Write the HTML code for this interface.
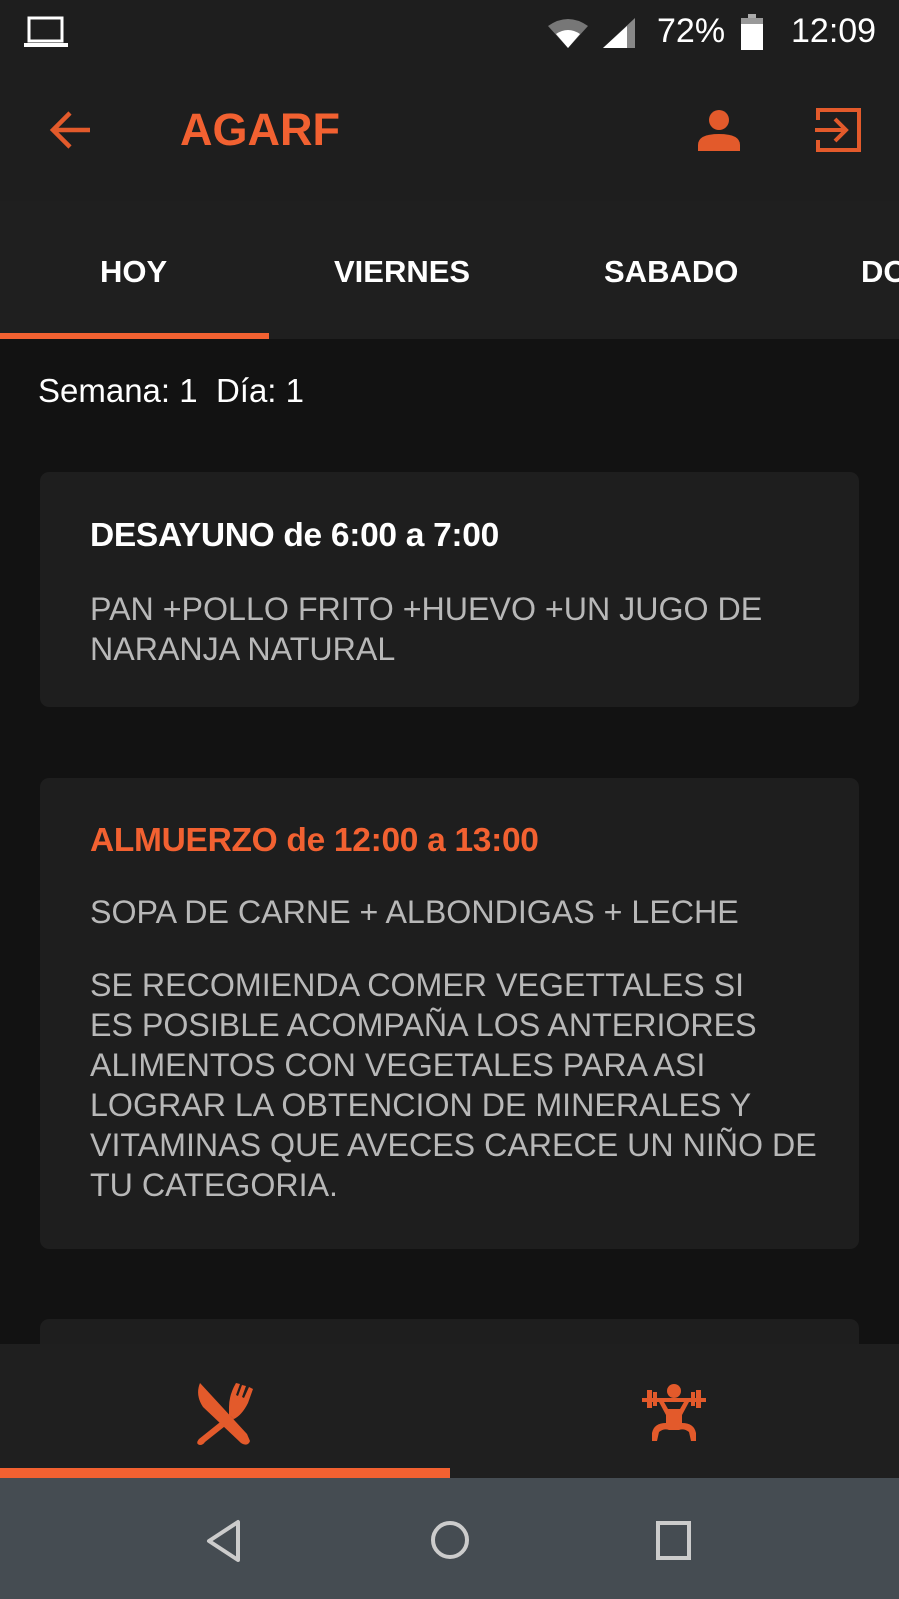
<!DOCTYPE html>
<html><head><meta charset="utf-8"><style>
*{margin:0;padding:0;box-sizing:border-box}
body{width:899px;height:1599px;background:#121212;font-family:"Liberation Sans",sans-serif;position:relative;overflow:hidden}
.a{position:absolute}
.status{left:0;top:0;width:899px;height:67px;background:#1e1e1e}
.appbar{left:0;top:67px;width:899px;height:134px;background:#1e1e1e}
.tabs{left:0;top:201px;width:899px;height:138px;background:#1f1f1f}
.tab{top:254px;color:#fff;font-size:31px;font-weight:bold;white-space:nowrap}
.card{left:40px;width:819px;background:#1e1e1e;border-radius:9px}
.t{left:90px;font-size:33.5px;font-weight:bold;white-space:nowrap;letter-spacing:-0.3px}
.b{left:90px;font-size:32.2px;color:#b8b8b8;line-height:40px;width:790px;white-space:nowrap}
</style></head><body>
<div class="a status"></div>
<svg class="a" style="left:24px;top:15px" width="44" height="34" viewBox="0 0 44 34"><rect x="5" y="3" width="33" height="23" fill="none" stroke="#fff" stroke-width="3"/><rect x="0" y="28" width="44" height="4" fill="#fff"/></svg>
<svg class="a" style="left:548px;top:18px" width="40" height="30" viewBox="0 0 40 30"><path d="M0 8 Q20 -6 40 8 L20 30 Z" fill="#777"/><path d="M8 16 Q20 8 32 16 L20 30Z" fill="#fff"/></svg>
<svg class="a" style="left:603px;top:18px" width="32" height="30"><path d="M32 0 V30 H0 Z" fill="#888"/><path d="M24 8 V30 H0 Z" fill="#fff"/></svg>
<div class="a" style="left:657px;top:12px;color:#fff;font-size:34px">72%</div>
<svg class="a" style="left:741px;top:14px" width="22" height="36"><rect x="7" y="0" width="8" height="4" fill="#aaa"/><rect x="0" y="4" width="22" height="7" fill="#999"/><rect x="0" y="10" width="22" height="26" fill="#fff"/></svg>
<div class="a" style="left:791px;top:12px;color:#fff;font-size:34px">12:09</div>
<div class="a appbar"></div>
<svg class="a" style="left:48px;top:110px" width="44" height="40" viewBox="0 0 44 40"><path d="M42 20 H6 M22 3 L5 20 L22 37" fill="none" stroke="#e35a2b" stroke-width="4.5"/></svg>
<div class="a" style="left:180px;top:104px;color:#f26131;font-size:45px;font-weight:bold">AGARF</div>
<svg class="a" style="left:697px;top:109px" width="44" height="42" viewBox="0 0 44 42"><circle cx="22" cy="11" r="10" fill="#e35a2b"/><path d="M1 42 V36 Q1 25 22 25 Q43 25 43 36 V42 Z" fill="#e35a2b"/></svg>
<svg class="a" style="left:815px;top:106px" width="48" height="48" viewBox="0 0 48 48"><path d="M3 14 V4 H44 V44 H3 V34" fill="none" stroke="#e35a2b" stroke-width="4"/><path d="M0 24 H30 M20 13 L31 24 L20 35" fill="none" stroke="#e35a2b" stroke-width="4"/></svg>
<div class="a tabs"></div>
<div class="a tab" style="left:100px">HOY</div>
<div class="a tab" style="left:334px">VIERNES</div>
<div class="a tab" style="left:604px">SABADO</div>
<div class="a tab" style="left:861px">DO</div>
<div class="a" style="left:0;top:333px;width:269px;height:6px;background:#f26131"></div>
<div class="a" style="left:38px;top:372px;color:#fff;font-size:33px">Semana: 1&nbsp; Día: 1</div>
<div class="a card" style="top:472px;height:235px"></div>
<div class="a t" style="top:517px;color:#fff">DESAYUNO de 6:00 a 7:00</div>
<div class="a b" style="top:589px">PAN +POLLO FRITO +HUEVO +UN JUGO DE<br>NARANJA NATURAL</div>
<div class="a card" style="top:778px;height:471px"></div>
<div class="a t" style="top:822px;color:#f26131">ALMUERZO de 12:00 a 13:00</div>
<div class="a b" style="top:892px">SOPA DE CARNE + ALBONDIGAS + LECHE</div>
<div class="a b" style="top:965px">SE RECOMIENDA COMER VEGETTALES SI<br>ES POSIBLE ACOMPAÑA LOS ANTERIORES<br>ALIMENTOS CON VEGETALES PARA ASI<br>LOGRAR LA OBTENCION DE MINERALES Y<br>VITAMINAS QUE AVECES CARECE UN NIÑO DE<br>TU CATEGORIA.</div>
<div class="a card" style="top:1319px;height:60px"></div>
<div class="a" style="left:0;top:1344px;width:899px;height:134px;background:#1f1f1f"></div>
<svg class="a" style="left:193px;top:1381px" width="66" height="66" viewBox="0 0 66 66"><g fill="#e35a2b"><path d="M7 2 Q2 14 10 26 L48 62 Q55 66 57 60 L54 53 Z"/><path d="M36 34 L6 58 Q2 63 7 64 Q10 64 12 61 L41 38 Z"/><path d="M36 34 L41 38 Q49 34 55 22 L60 8 L56 6 L51 17 L49 16 L53 5 L49 4 L45 15 L43 14 L47 3 L43 2 Q36 14 36 26 Z"/></g></svg>
<svg class="a" style="left:642px;top:1381px" width="64" height="62" viewBox="0 0 64 62"><g fill="#e35a2b"><rect x="0" y="17" width="64" height="4"/><rect x="5" y="9" width="5" height="18"/><rect x="11" y="11" width="4" height="14"/><rect x="54" y="9" width="5" height="18"/><rect x="49" y="11" width="4" height="14"/><circle cx="32" cy="10" r="7"/><path d="M17 21 L24 34 V42 Q12 42 10 52 L10 60 H15 L17 51 Q22 47 27 49 H37 Q42 47 47 51 L49 60 H54 L54 52 Q52 42 40 42 V34 L47 21 H42 L38 28 H26 L22 21 Z"/></g></svg>
<div class="a" style="left:0;top:1468px;width:450px;height:10px;background:#f26131"></div>
<div class="a" style="left:0;top:1478px;width:899px;height:121px;background:#454c52"></div>
<svg class="a" style="left:205px;top:1519px" width="40" height="44" viewBox="0 0 40 44"><path d="M33 3 V41 L4 22 Z" fill="none" stroke="#ccc" stroke-width="4" stroke-linejoin="round"/></svg>
<svg class="a" style="left:428px;top:1518px" width="44" height="44"><circle cx="22" cy="22" r="17" fill="none" stroke="#ccc" stroke-width="4"/></svg>
<svg class="a" style="left:655px;top:1520px" width="38" height="42"><rect x="3" y="3" width="31" height="35" fill="none" stroke="#ccc" stroke-width="4"/></svg>
</body></html>
